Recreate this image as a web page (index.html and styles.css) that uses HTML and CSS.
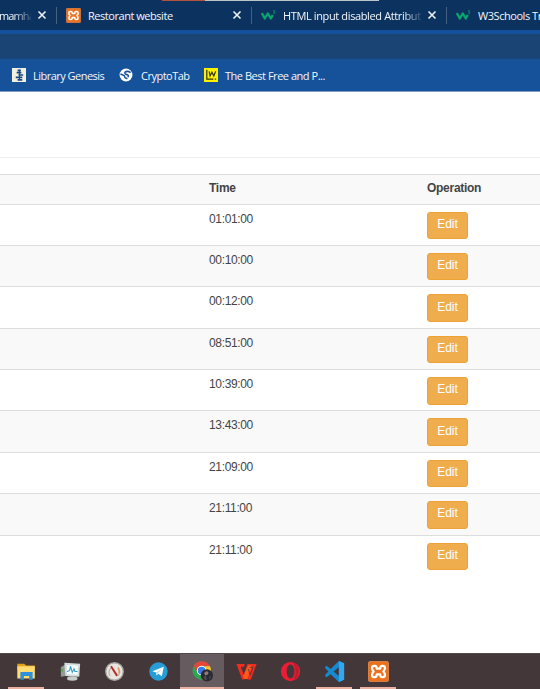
FILE: index.html
```
<!DOCTYPE html>
<html lang="en">
<head>
<meta charset="utf-8">
<title>Restorant website</title>
<link rel="stylesheet" href="styles.css">
</head>
<body>
<svg class="defs" width="0" height="0" aria-hidden="true">
  <symbol id="close" viewBox="0 0 10 10"><path d="M1.5 1.5l7 7M8.5 1.5l-7 7" fill="none" stroke="#edf1f6" stroke-width="1.6"/></symbol>
  <symbol id="xampp" viewBox="0 0 24 24"><rect x=".5" y=".5" width="23" height="23" rx="2" fill="#ec711e" stroke="#e58a4c"/><path d="M8 5.6H7Q4.600 5.600 4.600 8T6.500 12Q4.600 13.600 4.600 16T7 18.400H8Q10 18.400 10 15.200H14Q14 18.400 16 18.400H17Q19.400 18.400 19.400 16T17.500 12Q19.400 10.400 19.400 8T17 5.600H16Q14 5.600 14 8.800H10Q10 5.600 8 5.600Z" fill="none" stroke="#fff" stroke-width="2.500" stroke-linejoin="round"/></symbol>
  <symbol id="w3" viewBox="0 0 15 12"><path d="M.8 3.500l3 5.500 3-5 3 5 2-3.500" fill="none" stroke="#08a56c" stroke-width="2.300" stroke-linejoin="round"/><path d="M12 1.200h1.700l-1 1.400q1.300.1 1 1.200-.6.800-1.600.3" fill="none" stroke="#08a56c" stroke-width=".7"/></symbol>
</svg>
<header>
  <div class="tabs">
    <div class="tab tab-first"><span class="title fade">mamha</span><svg class="x"><use href="#close"/></svg></div>
    <div class="tab"><svg class="fav"><use href="#xampp"/></svg><span class="title restaurant">Restorant website</span><svg class="x"><use href="#close"/></svg></div>
    <div class="tab"><svg class="fav"><use href="#w3"/></svg><span class="title fade">HTML input disabled Attribut</span><svg class="x"><use href="#close"/></svg></div>
    <div class="tab tab-last"><svg class="fav"><use href="#w3"/></svg><span class="title schools">W3Schools Tr</span></div>
    <i class="edge"></i>
  </div>
  <div class="toolbar"></div>
  <nav class="bookmarks">
    <svg class="mark" viewBox="0 0 15 15"><path fill="#f1f0df" d="M0 0h15v15H0z"/><path d="M6 2.500h3.500M5 5h5M7 7.500h5M4 10h7M6 12.700h5" stroke="#174782" stroke-width="1.700"/><path d="M8 2v10" stroke="#174782" stroke-width="1.200"/></svg><span class="genesis">Library Genesis</span>
    <svg class="mark" viewBox="0 0 15 15"><circle cx="7.500" cy="7.500" r="6.900" fill="#fff"/><path d="M12.500 5Q9 2.500 6.500 4.500q-.8 1.600 1 2.200l2 .8q1.300 1-.2 2.300M1.500 6.500l4 1.500 1 2.500 2.500 1" fill="none" stroke="#15529a" stroke-width="1.600"/></svg><span class="crypto">CryptoTab</span>
    <svg class="mark" viewBox="0 0 15 15"><path fill="#fff200" d="M0 0h15v15H0z"/><path d="M3 2v10h7M5.500 3.500l1 5 2-4 2 4 2-5M11.500 12h1.500" fill="none" stroke="#323514" stroke-width="1.300"/></svg><span class="best">The Best Free and P...</span>
  </nav>
</header>
<main>
  <hr>
  <table>
    <thead><tr><th class="before"></th><th class="time">Time</th><th>Operation</th></tr></thead>
    <tbody>
      <tr><td></td><td>01:01:00</td><td><button>Edit</button></td></tr>
      <tr><td></td><td>00:10:00</td><td><button>Edit</button></td></tr>
      <tr><td></td><td>00:12:00</td><td><button>Edit</button></td></tr>
      <tr><td></td><td>08:51:00</td><td><button>Edit</button></td></tr>
      <tr><td></td><td>10:39:00</td><td><button>Edit</button></td></tr>
      <tr><td></td><td>13:43:00</td><td><button>Edit</button></td></tr>
      <tr><td></td><td>21:09:00</td><td><button>Edit</button></td></tr>
      <tr><td></td><td>21:11:00</td><td><button>Edit</button></td></tr>
      <tr><td></td><td>21:11:00</td><td><button>Edit</button></td></tr>
    </tbody>
  </table>
</main>
<footer>
  <div class="app open"><svg viewBox="0 0 24 24"><path d="M1.500 3h8l2 2h10v5h-20z" fill="#e0a11b"/><path d="M1.500 6h20v14h-20z" fill="#ffdb72"/><path d="M5 12.500h14v9h-4V17H9v4.500H5z" fill="#2c91d7"/></svg></div>
  <div class="app"><svg viewBox="0 0 24 24"><path d="M1 7l5-3v13l-5 1z" fill="#929c9a"/><path d="M1 9h2.500v3H1z" fill="#55a64f"/><path d="M5 2l18 1-1 15-16-1z" fill="#d4dcdd"/><path d="M7.500 4.500l13 .6-.5 10.500L8 15z" fill="#f6fbfc"/><path d="M8 12l3-1 1-5 2 7 2-4 1 3h3" fill="none" stroke="#3698c6" stroke-width="1.200"/><ellipse cx="14" cy="20" rx="6" ry="2.500" fill="#c5cbca"/></svg></div>
  <div class="app"><svg viewBox="0 0 24 24"><circle cx="12" cy="12" r="10" fill="#e9e6de" stroke="#a6a6a3" stroke-width="1.500"/><path d="M7 17q-3-5 1-9M16 7q4 5 0 10" fill="none" stroke="#bbb9b3" stroke-width="1.500"/><path d="M16 8q2 3 1 6" stroke="#df955e" fill="none" stroke-width="1.500"/><path d="M8 6l7 11" stroke="#b8272b" stroke-width="2.200"/></svg></div>
  <div class="app"><svg viewBox="0 0 24 24"><circle cx="12" cy="12" r="10.500" fill="#279dd8"/><path d="M5 11.800L18 6.500l-2.200 11-4-3-2.100 2-.3-3.500z" fill="#fff"/><path d="M9.400 13l6-4-3.900 5-1.800 2z" fill="#b8d9ea"/></svg></div>
  <div class="app active"><svg viewBox="0 0 24 24"><circle cx="11" cy="11" r="10.500" fill="#2da64f"/><path d="M2 5.500A10.500 10.500 0 0 1 20.500 6H11l-4.300 7.500z" fill="#e7463b"/><path d="M20.500 6A10.500 10.500 0 0 1 11 21.500l4.300-8Q17 9 14 6z" fill="#fbc72c"/><circle cx="11" cy="11" r="5.500" fill="#fff"/><circle cx="11" cy="11" r="4.300" fill="#3979e8"/><circle cx="17" cy="16.500" r="7" fill="#292b35"/><path d="M14 13.500l3-2 2 2-1 2-3 1z" fill="#9d7774"/><path d="M13 18l3-1 1 4-2 1zM20 17l2 1-2 3z" fill="#514b58"/></svg></div>
  <div class="app"><svg viewBox="0 0 24 24"><path d="M.5 3.500H10L9 7H6l3 8 4-11.500h10.500L17 21h-4l-1.500-5-2 5H7z" fill="#f02b20"/><path d="M14 5h4l-5 15.500h-3.500L8 17z" fill="#ff5b1d"/><path d="M9.300 7l-3 .2 3 8M14 9l2.300 7 3-9-4 .2" fill="none" stroke="#493438" stroke-width=".9"/></svg></div>
  <div class="app"><svg viewBox="0 0 24 24"><ellipse cx="12" cy="12" rx="11" ry="11" fill="#ed1c35"/><path d="M15 2A11 11 0 0 1 15 22Q21 12 15 2" fill="#b91d30"/><ellipse cx="12" cy="12" rx="4.500" ry="8" fill="#43373a"/></svg></div>
  <div class="app open"><svg viewBox="0 0 24 24"><path d="M17 0l6 2.500v19L17 24 7.500 15 3 18.500.8 16.500 5 12 .8 7.500 3 5.500 7.500 9zM17 7l-6 5 6 5z" fill="#1589d1" fill-rule="evenodd"/><path d="M17 0l6 2.500v19L17 24z" fill="#32a8ee"/></svg></div>
  <div class="app open"><svg viewBox="0 0 24 24"><use href="#xampp"/></svg></div>
</footer>
</body>
</html>
```
FILE: styles.css
```
* { box-sizing: border-box; }
body { margin: 0; width: 540px; height: 689px; overflow: hidden; display: flex; flex-direction: column; background: #fff; }
.defs { display: none; }
header { height: 92px; flex: none; color: #f2f6fb; font: 500 11px "Open Sans", sans-serif; background: #15529a; border-bottom: 1px solid #7d9fc6; }
.tabs { height: 30px; display: flex; position: relative; background: #0c335f; }
.edge { position: absolute; top: 0; left: 162px; width: 217px; height: 1px; background: linear-gradient(90deg, #b4533d 43px, #bdc5cb 43px); }
.tab { width: 195px; height: 30px; display: flex; align-items: center; padding: 0 9px 0 10px; flex: none; position: relative; }
.tab::after { content: ""; position: absolute; right: -1px; top: 7px; width: 1px; height: 17px; background: #47617f; }
.tab-first { width: 56px; padding-left: 0; }
.tab-last { width: 94px; padding-right: 0; }
.tab-last::after { display: none; }
.title { white-space: nowrap; }
.fade { max-width: 138px; mask-image: linear-gradient(90deg, #000 calc(100% - 18px), rgba(0, 0, 0, .15)); }
.tab-first .fade { width: 32px; letter-spacing: -.9px; margin-left: -1px; }
.restaurant { letter-spacing: -.46px; }
.tab:nth-child(3) .title { letter-spacing: -.37px; }
.schools { letter-spacing: -.45px; }
.fav { width: 15px; height: 15px; margin-right: 7px; flex: none; }
.x { width: 10px; height: 10px; margin-left: auto; flex: none; }
.toolbar { height: 29px; background: #1a4474; border-top: 4px solid #15509a; }
.bookmarks { height: 32px; display: flex; align-items: center; padding-left: 12px; white-space: nowrap; }
.mark { width: 14px; height: 14px; margin-right: 7px; flex: none; }
.genesis { width: 86px; letter-spacing: -.52px; }
.crypto { width: 63px; letter-spacing: -.5px; margin-left: 1px; }
.best { letter-spacing: -.47px; }
main { flex: 1; min-height: 0; padding-top: 65px; }
hr { border: 0; height: 1px; background: #eee; margin: 0 0 16px; }
table { width: 100%; table-layout: fixed; border-collapse: separate; border-spacing: 0; color: #444; font: 12px "Liberation Sans", sans-serif; }
th { height: 30.5px; padding: 0 0 2px; text-align: left; border-top: 1px solid #ddd; border-bottom: 1px solid #ddd; background: #f9f9f9; letter-spacing: -.28px; color: #444; }
.before { width: 209px; }
.time { width: 218px; }
td { height: 41.4px; padding: 7px 0 0; vertical-align: top; line-height: 14px; letter-spacing: -.35px; border-bottom: 1px solid #ddd; }
tr:nth-child(even) td { background: #f9f9f9; }
tbody tr:last-child td { border-bottom: 0; }
button { display: block; width: 41px; height: 27.5px; padding: 0 0 3px; border: 1px solid #eea236; border-radius: 3px; background: #f0ad4e; color: #fff; font: 12px "Liberation Sans", sans-serif; letter-spacing: -.1px; }
footer { height: 36px; display: flex; flex: none; padding-left: 4px; background: #43373a; border-top: 1px solid #544a4c; }
.app { width: 44px; height: 35px; display: flex; align-items: center; justify-content: center; position: relative; padding-bottom: 1px; }
.app svg { width: 21px; height: 21px; }
.open::after, .active::after { content: ""; position: absolute; left: 4px; right: 4px; bottom: 0; height: 2px; background: #eab1a1; }
.active { background: #665b5e; }
.active::after { left: 0; right: 0; }
```
